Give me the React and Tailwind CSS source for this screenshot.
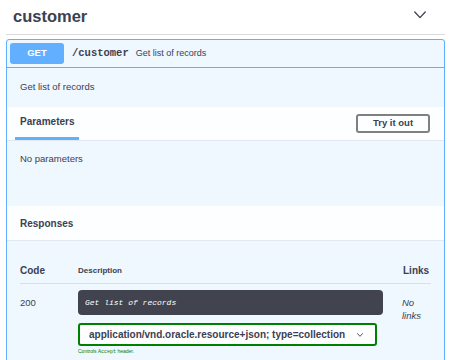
import React from 'react';

const sans = "font-['Liberation_Sans',Arial,sans-serif]";
const mono = "font-['Liberation_Mono','Courier_New',monospace]";

function Chevron({ className, stroke = 1.4 }) {
  return (
    <svg viewBox="0 0 12 8" className={className} fill="none" stroke="currentColor" strokeWidth={stroke}>
      <polyline points="0.8,1 6,6.6 11.2,1" strokeLinejoin="round" strokeLinecap="round" />
    </svg>
  );
}

export default function App() {
  return (
    <div className={`w-[450px] h-[360px] overflow-hidden bg-white text-[#3b4151] ${sans}`}>
      {/* tag header */}
      <div className="h-[35px] ml-[6px] mr-[5px] border-b border-[#dcdde0] flex items-center justify-between pl-[7px] pr-[19px]">
        <h4 className="text-[16.5px] font-bold leading-none -mt-[2px]">customer</h4>
        <Chevron className="w-[12px] h-[8px] text-[#3b4151] -mt-[4px]" stroke={1.3} />
      </div>

      {/* operation block */}
      <div className="mt-[4px] ml-[6px] mr-[5px] border border-[#61affe] rounded-[3px] bg-[#eff7ff]">
        <div className="flex items-center py-[3px] px-[3px] border-b border-[#61affe]">
          <span className="w-[54px] h-[21px] rounded-[3px] bg-[#61affe] text-white text-[9.5px] font-bold flex items-center justify-center">
            GET
          </span>
          <span className={`ml-[8px] text-[10.5px] font-bold ${mono}`}>/customer</span>
          <span className="ml-[7px] text-[9px]">Get list of records</span>
        </div>

        <div className="h-[39px] flex items-center px-[13px] text-[9.5px]">Get list of records</div>

        {/* parameters header */}
        <div className="h-[34px] bg-[#fcfeff] border-b border-[#e3e8ee] flex items-center justify-between pl-[8px] pr-[14px]">
          <div className="h-full flex items-end">
            <span className="px-[5px] pb-[8px] text-[10px] font-bold border-b-[3px] border-[#61affe] leading-[14px]">Parameters</span>
          </div>
          <button className="w-[74px] h-[19px] border-2 border-[#808080] rounded-[3px] bg-transparent text-[9.5px] font-bold flex items-center justify-center">
            Try it out
          </button>
        </div>

        <div className="h-[65px] px-[13px] pt-[11px] text-[9.5px]">No parameters</div>

        {/* responses header */}
        <div className="h-[35px] bg-[#fcfeff] border-b border-[#e3e8ee] flex items-center px-[13px]">
          <span className="text-[10px] font-bold">Responses</span>
        </div>

        <div className="px-[13px] pt-[19px] pb-[20px]">
          <div className="flex items-center h-[24px] border-b border-[#dcdee2] pb-[2px]">
            <span className="w-[58px] text-[10px] font-bold">Code</span>
            <span className="flex-1 text-[8px] font-bold">Description</span>
            <span className="w-[28px] text-[10px] font-bold">Links</span>
          </div>
          <div className="flex pt-[6px]">
            <div className="w-[58px] pt-[6px] text-[9.5px] leading-[13px]">200</div>
            <div className="w-[305px]">
              <div className={`h-[25px] rounded-[4px] bg-[#41444e] text-white text-[8px] italic flex items-center px-[7px] ${mono}`}>
                Get list of records
              </div>
              <div className="mt-[8px] w-[299px] h-[23px] border-2 border-[#008000] rounded-[3px] bg-white flex items-center pl-[9px] pr-[12px] justify-between">
                <span className="text-[10px] font-bold">application/vnd.oracle.resource+json; type=collection</span>
                <Chevron className="w-[6px] h-[4px] text-[#3b4151]" stroke={1.8} />
              </div>
              <div className="mt-[2px] text-[5px] text-[#008000] leading-[7px]">
                Controls <span className={mono}>Accept</span> header.
              </div>
            </div>
            <div className="ml-[19px] pt-[6px] text-[9.5px] italic leading-[13px]">
              No<br />links
            </div>
          </div>
        </div>
      </div>
    </div>
  );
}
